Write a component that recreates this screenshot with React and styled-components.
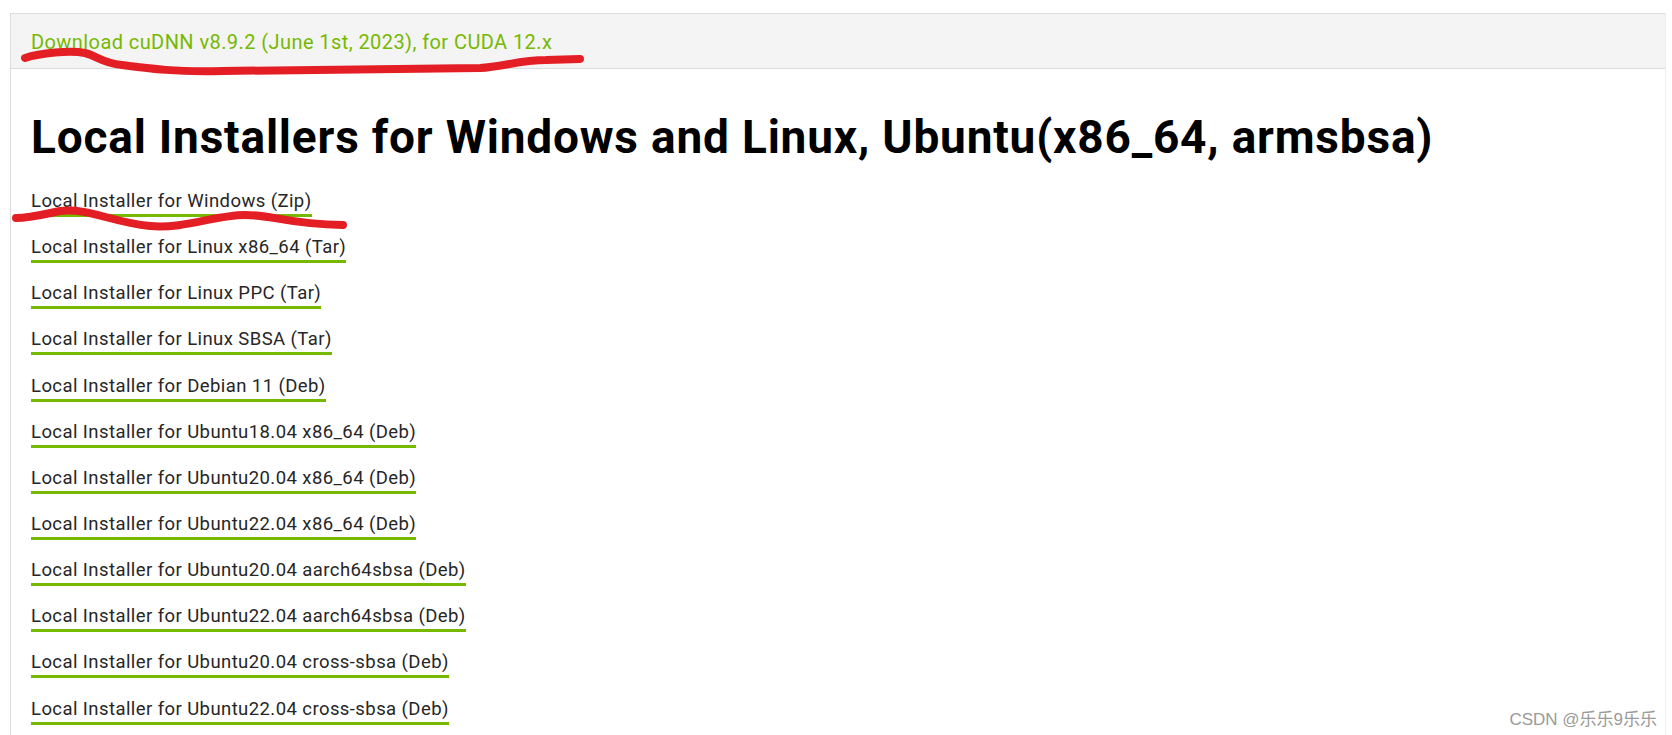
import React from "react";
import styled, { createGlobalStyle } from "styled-components";

const Global = createGlobalStyle`
  html, body { margin: 0; padding: 0; background: #fff; }
  body { width: 1672px; height: 735px; overflow: hidden; font-family: Roboto, "Liberation Sans", sans-serif; }
`;

const Page = styled.div`
  position: relative;
  width: 1672px;
  height: 735px;
  padding: 13px 6px 0 10px;
  box-sizing: border-box;
`;

const Panel = styled.div`
  border-left: 1px solid #dcdcdc;
  border-right: 1px solid #eeeeee;
  height: 722px;
  box-sizing: border-box;
`;

const Header = styled.div`
  height: 56px;
  box-sizing: border-box;
  background: #f4f4f4;
  border-top: 1px solid #dcdcdc;
  border-bottom: 1px solid #dcdcdc;
  padding: 2px 0 0 20px;
  display: flex;
  align-items: center;
`;

const HeaderLink = styled.a`
  color: #76b900;
  font-size: 20px;
  letter-spacing: 0.42px;
  text-decoration: none;
`;

const Content = styled.div`
  padding: 41px 0 0 20px;
`;

const Title = styled.h2`
  margin: 0 0 26px 0;
  font-size: 46px;
  font-weight: 700;
  letter-spacing: 0.8px;
  line-height: 54px;
  color: #000;
`;

const List = styled.div`
  display: flex;
  flex-direction: column;
  align-items: flex-start;
  gap: 19.15px;
`;

const Item = styled.a`
  display: inline-block;
  color: #262626;
  font-size: 18.5px;
  letter-spacing: 0.42px;
  line-height: 22px;
  text-decoration: none;
  border-bottom: 3px solid #76b900;
  padding-bottom: 2px;
`;

const Overlay = styled.svg`
  position: absolute;
  left: 0;
  top: 0;
  pointer-events: none;
`;

const Watermark = styled.div`
  position: absolute;
  right: 15px;
  bottom: 5px;
  font-family: "Liberation Sans", "Noto Sans CJK SC", sans-serif;
  font-size: 17px;
  color: #9a9a9a;
  text-shadow: 0 0 1px #fff;
`;

const links = [
  "Local Installer for Windows (Zip)",
  "Local Installer for Linux x86_64 (Tar)",
  "Local Installer for Linux PPC (Tar)",
  "Local Installer for Linux SBSA (Tar)",
  "Local Installer for Debian 11 (Deb)",
  "Local Installer for Ubuntu18.04 x86_64 (Deb)",
  "Local Installer for Ubuntu20.04 x86_64 (Deb)",
  "Local Installer for Ubuntu22.04 x86_64 (Deb)",
  "Local Installer for Ubuntu20.04 aarch64sbsa (Deb)",
  "Local Installer for Ubuntu22.04 aarch64sbsa (Deb)",
  "Local Installer for Ubuntu20.04 cross-sbsa (Deb)",
  "Local Installer for Ubuntu22.04 cross-sbsa (Deb)",
];

export default function App() {
  return (
    <>
      <Global />
      <Page>
        <Panel>
          <Header>
            <HeaderLink href="#">Download cuDNN v8.9.2 (June 1st, 2023), for CUDA 12.x</HeaderLink>
          </Header>
          <Content>
            <Title>Local Installers for Windows and Linux, Ubuntu(x86_64, armsbsa)</Title>
            <List>
              {links.map((l) => (
                <Item key={l} href="#">{l}</Item>
              ))}
            </List>
          </Content>
        </Panel>
        <Overlay width="1672" height="735" viewBox="0 0 1672 735">
          <path
            d="M25,58 C40,53 70,50 85,53 C97,56 102,63 122,65 C152,69 175,72 222,71 L480,68 C502,67 520,60 546,60 L580,59"
            fill="none" stroke="#e31e24" strokeWidth="8" strokeLinecap="round" strokeLinejoin="round"
          />
          <path
            d="M16,218 C30,218 45,214 60,211 C90,208 110,222 150,226 C185,229 215,215 245,215 C275,215 285,224 343,225"
            fill="none" stroke="#e31e24" strokeWidth="8" strokeLinecap="round" strokeLinejoin="round"
          />
        </Overlay>
        <Watermark>CSDN @乐乐9乐乐</Watermark>
      </Page>
    </>
  );
}
